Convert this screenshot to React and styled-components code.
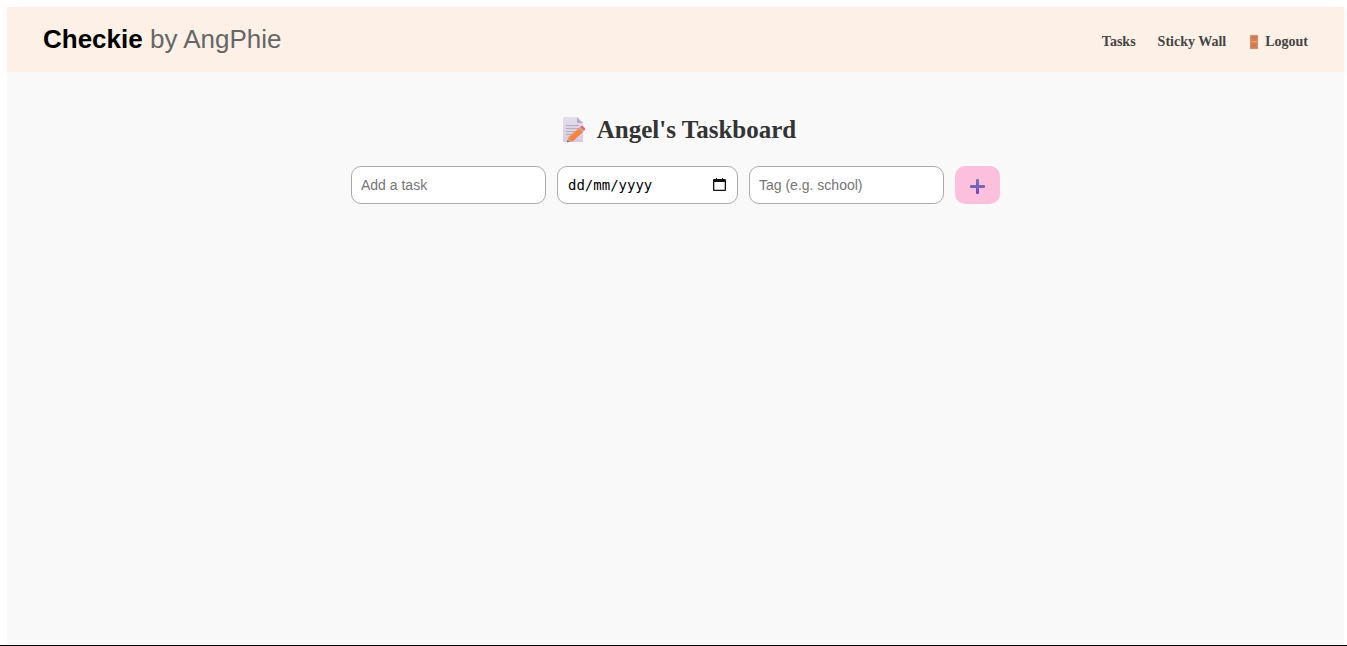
import React from "react";
import styled, { createGlobalStyle } from "styled-components";

const GlobalStyle = createGlobalStyle`
  *, *::before, *::after { box-sizing: border-box; }
  html, body { margin: 0; background: #ffffff; }
  body { font-family: "Liberation Serif", "Times New Roman", serif; }
`;

const Page = styled.div`
  display: flex;
  flex-direction: column;
  min-height: 100vh;
  padding: 7px 3px 0 7px;
  border-bottom: 1px solid #000000;
`;

const Header = styled.header`
  display: flex;
  align-items: center;
  justify-content: space-between;
  height: 65px;
  padding: 0 36px;
  background: #fdf0e6;
  box-shadow: 0 2px 8px rgba(0, 0, 0, 0.05);
`;

const Brand = styled.div`
  padding-bottom: 2px;
  font-family: "Liberation Sans", Arial, sans-serif;
  font-size: 26px;
  line-height: 30px;
  color: #666666;

  strong { color: #000000; }
`;

const Nav = styled.nav`
  display: flex;
  gap: 22px;
  padding-top: 4px;
`;

const NavLink = styled.a`
  display: flex;
  align-items: center;
  gap: 5px;
  font-size: 14px;
  line-height: 18px;
  font-weight: bold;
  color: #444444;
  text-decoration: none;
`;

const Board = styled.main`
  flex: 1;
  display: flex;
  flex-direction: column;
  align-items: center;
  gap: 21px;
  padding: 43px 20px 20px;
  background: #f9f9f9;
`;

const Title = styled.h1`
  display: flex;
  align-items: center;
  gap: 10px;
  margin: 0;
  padding-left: 8px;
  font-size: 25px;
  line-height: 30px;
  color: #333333;
`;

const TaskForm = styled.form`
  display: flex;
  gap: 11px;
`;

const Field = styled.input`
  width: 195px;
  height: 38px;
  padding: 0 9px;
  border: 1px solid #aaaaaa;
  border-radius: 10px;
  background: #ffffff;
  font-family: "Liberation Sans", Arial, sans-serif;
  font-size: 14px;
  color: #000000;

  &::placeholder { color: #757575; opacity: 1; }
`;

const DateBox = styled.div`
  display: flex;
  align-items: center;
  width: 181px;
  height: 38px;
  padding: 0 11px 0 10px;
  border: 1px solid #aaaaaa;
  border-radius: 10px;
  background: #ffffff;
`;

const DateInput = styled.input`
  flex: 1;
  min-width: 0;
  padding: 0;
  border: 0;
  background: transparent;
  font-family: "DejaVu Sans Mono", monospace;
  font-size: 14px;
  color: #000000;

  &::placeholder { color: #000000; opacity: 1; }
`;

const PickerButton = styled.button`
  display: flex;
  padding: 0;
  border: 0;
  background: transparent;
`;

const AddButton = styled.button`
  display: flex;
  align-items: center;
  justify-content: center;
  width: 45px;
  height: 38px;
  padding: 2px 0 0;
  border: 0;
  border-radius: 10px;
  background: #fcc0dc;
`;

const MemoIcon = () => (
  <svg width="24" height="26" viewBox="0 0 24 26" aria-hidden="true">
    <defs>
      <linearGradient id="paper" x1="0" y1="0" x2="0" y2="1">
        <stop offset="0" stopColor="#e4dfeb" />
        <stop offset="1" stopColor="#d6cae1" />
      </linearGradient>
      <linearGradient id="pencil" x1="0" y1="0" x2="1" y2="1">
        <stop offset="0" stopColor="#ffa54a" />
        <stop offset="1" stopColor="#ee6638" />
      </linearGradient>
    </defs>
    <path d="M1 0h13l6 6v18q0 1-1 1H1q-1 0-1-1V1q0-1 1-1z" fill="url(#paper)" />
    <path d="M14 0l6 6h-5q-1 0-1-1z" fill="#b8adc4" />
    <path d="M3 8.500h13M3 11.500h13M3 14.500h11M3 17.500h7" stroke="#b4adbe" strokeWidth="1.200" />
    <path d="M16 11l4 4-10 9-5.500 1 1-5z" fill="url(#pencil)" />
    <path d="M5.200 20.700l3.500 3.500-4.400 1z" fill="#d5a08c" />
    <path d="M4.600 23.400l1.400 1.300-2 .5z" fill="#4b344b" />
    <path d="M16 11l1.200-1.200 4 4L20 15z" fill="#b9a8bc" />
    <path d="M17.200 9.800q1.600-1.600 3-.4l1.600 1.700q1.200 1.300-.6 2.700z" fill="#fa5263" />
  </svg>
);

const DoorIcon = () => (
  <svg width="12" height="14" viewBox="0 0 12 14" aria-hidden="true">
    <path d="M2 0h8v14H2z" fill="#d88c62" />
    <path d="M3 1h6v5H3zM3 8h6v5H3z" fill="#d18059" />
    <path d="M4 2.500h4M4 10.500h4" stroke="#c17552" />
    <path d="M3 6.500h6" stroke="#ee9d5c" />
  </svg>
);

const CalendarIcon = () => (
  <svg width="13" height="14" viewBox="0 0 13 14" aria-hidden="true">
    <path
      d="M2 1h1V0h1v1h5V0h1v1h1q2 0 2 1v10q0 1-1 1H1q-1 0-1-1V2q0-1 1-1zM1.300 4v7.700h10.400V4z"
      fill="#111111"
      fillRule="evenodd"
    />
  </svg>
);

const PlusIcon = () => (
  <svg width="15" height="15" viewBox="0 0 15 15" aria-hidden="true">
    <defs>
      <linearGradient id="plus" x1="0" y1="0" x2="0" y2="1">
        <stop offset="0" stopColor="#6d78b4" />
        <stop offset="0.550" stopColor="#7764b8" />
        <stop offset="1" stopColor="#6d3dc4" />
      </linearGradient>
    </defs>
    <path
      d="M6 1q0-1 1-1h1q1 0 1 1v5h5q1 0 1 1v1q0 1-1 1H9v5q0 1-1 1H7q-1 0-1-1V9H1Q0 9 0 8V7q0-1 1-1h5z"
      fill="url(#plus)"
    />
  </svg>
);

export default function App() {
  return (
    <>
      <GlobalStyle />
      <Page>
        <Header>
          <Brand><strong>Checkie</strong> by AngPhie</Brand>
          <Nav>
            <NavLink href="#tasks">Tasks</NavLink>
            <NavLink href="#wall">Sticky Wall</NavLink>
            <NavLink href="#logout"><DoorIcon />Logout</NavLink>
          </Nav>
        </Header>
        <Board>
          <Title><MemoIcon />Angel's Taskboard</Title>
          <TaskForm onSubmit={(event) => event.preventDefault()}>
            <Field type="text" placeholder="Add a task" aria-label="Task" />
            <DateBox>
              <DateInput type="text" placeholder="dd/mm/yyyy" aria-label="Due date" />
              <PickerButton type="button" aria-label="Open calendar"><CalendarIcon /></PickerButton>
            </DateBox>
            <Field type="text" placeholder="Tag (e.g. school)" aria-label="Tag" />
            <AddButton type="submit" aria-label="Add task"><PlusIcon /></AddButton>
          </TaskForm>
        </Board>
      </Page>
    </>
  );
}
